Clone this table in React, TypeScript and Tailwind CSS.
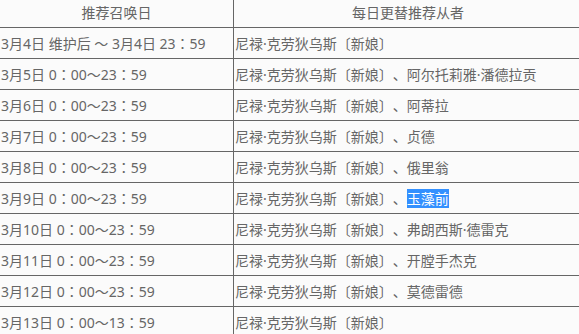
const rows: { date: string; servants: string[]; highlight?: boolean }[] = [
  { date: "3月4日 维护后 ～ 3月4日 23：59", servants: [] },
  { date: "3月5日 0：00～23：59", servants: ["阿尔托莉雅·潘德拉贡"] },
  { date: "3月6日 0：00～23：59", servants: ["阿蒂拉"] },
  { date: "3月7日 0：00～23：59", servants: ["贞德"] },
  { date: "3月8日 0：00～23：59", servants: ["俄里翁"] },
  { date: "3月9日 0：00～23：59", servants: ["玉藻前"], highlight: true },
  { date: "3月10日 0：00～23：59", servants: ["弗朗西斯·德雷克"] },
  { date: "3月11日 0：00～23：59", servants: ["开膛手杰克"] },
  { date: "3月12日 0：00～23：59", servants: ["莫德雷德"] },
  { date: "3月13日 0：00～13：59", servants: [] },
];

const fixed = "尼禄·克劳狄乌斯〔新娘〕";

export default function App() {
  return (
    <div className="h-[334px] w-[579px] overflow-hidden bg-[#fbfbfb] text-[14px] text-[#666] [font-family:'Noto_Sans','Noto_Sans_CJK_SC',sans-serif]">
      <div className="-ml-px -mt-[4px] w-[584px] border-l border-[#666]">
        <div className="grid h-[31px] grid-cols-[234px_1fr] border-t border-[#666]">
          <div className="flex items-center justify-center border-r border-[#666]">推荐召唤日</div>
          <div className="flex items-center justify-center border-r border-[#666]">每日更替推荐从者</div>
        </div>
        {rows.map((r) => (
          <div key={r.date} className="grid h-[31px] grid-cols-[234px_1fr] border-t border-[#666]">
            {/* TC font keeps the full-width colon centred like the original */}
            <div className="flex items-center whitespace-pre border-r border-[#666] pl-px [font-family:'Noto_Sans','Noto_Sans_CJK_TC',sans-serif]">
              {r.date}
            </div>
            <div className="flex items-center whitespace-nowrap border-r border-[#666] pl-px">
              {fixed}
              {r.servants.map((s) => (
                <span key={s}>
                  、
                  <span className={r.highlight ? "bg-[#3390ff] text-white" : ""}>{s}</span>
                </span>
              ))}
            </div>
          </div>
        ))}
      </div>
    </div>
  );
}
